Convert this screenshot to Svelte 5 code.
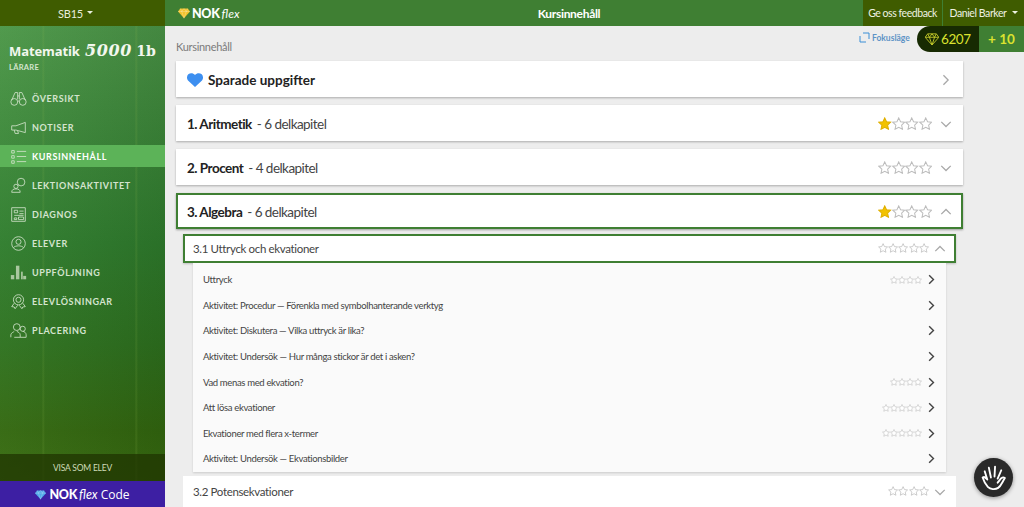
<script>
	const nav = [
		{ label: 'Översikt', icon: 'binoculars' },
		{ label: 'Notiser', icon: 'megaphone' },
		{ label: 'Kursinnehåll', icon: 'list', active: true },
		{ label: 'Lektionsaktivitet', icon: 'lesson' },
		{ label: 'Diagnos', icon: 'diagnos' },
		{ label: 'Elever', icon: 'student' },
		{ label: 'Uppföljning', icon: 'bars' },
		{ label: 'Elevlösningar', icon: 'award' },
		{ label: 'Placering', icon: 'people' }
	];

	const chapters = [
		{ num: '1. Aritmetik', sub: '6 delkapitel', filled: 1 },
		{ num: '2. Procent', sub: '4 delkapitel', filled: 0 },
		{ num: '3. Algebra', sub: '6 delkapitel', filled: 1, open: true }
	];

	const lessons = [
		{ name: 'Uttryck', stars: 4 },
		{ name: 'Aktivitet: Procedur — Förenkla med symbolhanterande verktyg', stars: 0 },
		{ name: 'Aktivitet: Diskutera — Vilka uttryck är lika?', stars: 0 },
		{ name: 'Aktivitet: Undersök — Hur många stickor är det i asken?', stars: 0 },
		{ name: 'Vad menas med ekvation?', stars: 4 },
		{ name: 'Att lösa ekvationer', stars: 5 },
		{ name: 'Ekvationer med flera x-termer', stars: 5 },
		{ name: 'Aktivitet: Undersök — Ekvationsbilder', stars: 0 }
	];

	const starPath = 'M12 1.500l3.200 6.900 7.300.9-5.400 5.100 1.500 7.400L12 18.200l-6.600 3.600 1.500-7.400-5.400-5.100 7.300-.9z';
</script>

{#snippet stars(count, filled, size)}
	<span class="stars">
		{#each Array(count) as _, i}
			<svg width={size} height={size} viewBox="0 0 24 24">
				<path
					d={starPath}
					fill={i < filled ? '#f2c200' : '#fff'}
					stroke={i < filled ? '#e0b000' : '#bdbdbd'}
					stroke-width="1.800"
				/>
			</svg>
		{/each}
	</span>
{/snippet}

{#snippet chevron(dir, color, size, weight = 1.500)}
	<svg class="chev" width={size} height={size} viewBox="0 0 14 14" fill="none" stroke={color} stroke-width={weight}>
		{#if dir === 'right'}
			<path d="M4 1.500L9.500 7 4 12.500" />
		{:else if dir === 'down'}
			<path d="M1.500 4.500L7 10l5.500-5.500" />
		{:else}
			<path d="M1.500 9.500L7 4l5.500 5.500" />
		{/if}
	</svg>
{/snippet}

{#snippet navIcon(name)}
	<svg class="nav-icon" viewBox="0 0 20 20" fill="none" stroke="#cfe2c8" stroke-width="1">
		{#if name === 'binoculars'}
			<circle cx="5" cy="14" r="4" /><circle cx="15" cy="14" r="4" />
			<path d="M2 12L6 3h3v8M18 12L14 3h-3v8M9 7h2M9 13h2" />
		{:else if name === 'megaphone'}
			<path d="M18 4v12L7 13H2V8h5zM5 13l1 4h4l-1-3" />
		{:else if name === 'list'}
			<path d="M2 3h3v3H2zM2 9h3v3H2zM2 15h3v3H2zM8 4h11M8 10h11M8 16h11" />
		{:else if name === 'lesson'}
			<circle cx="13" cy="6" r="4.500" /><circle cx="7" cy="11" r="2.500" />
			<path d="M2 18c0-3 2-4 5-4s5 1 5 4zM10 9l-1 1" />
		{:else if name === 'diagnos'}
			<path d="M2 2h16v16H2z" />
			<path d="M5 5h4v3H5zM11 6h5M11 9h5M5 11h11M5 14h3v2H5zM10 13h6v3h-6z" />
		{:else if name === 'student'}
			<circle cx="10" cy="10" r="8" /><circle cx="10" cy="8" r="3" />
			<path d="M4 15c2-3 10-3 12 0" />
		{:else if name === 'bars'}
			<g fill="#a9c89f" stroke="none">
				<rect x="1" y="13" width="4" height="5" /><rect x="7" y="2" width="4" height="16" /><rect x="13" y="9" width="2" height="9" /><rect x="15.500" y="14" width="3.500" height="4" />
			</g>
		{:else if name === 'award'}
			<circle cx="10" cy="8" r="6" /><circle cx="10" cy="8" r="3" />
			<path d="M5 12l-3 4 3 .5 1 2 3-4M15 12l3 4-3 .5-1 2-3-4" />
		{:else}
			<circle cx="8" cy="6" r="4" /><circle cx="15" cy="8" r="3" />
			<path d="M1 18v-3c0-2 3-3 4-4M15 11c2 0 4 2 4 4v3h-7M5 18h7v-3c0-2-2-3-4-4" />
		{/if}
	</svg>
{/snippet}

{#snippet diamond(w, fill)}
	<svg width={w} height={w} viewBox="0 0 16 16">
		<path d="M3 2h10l3 4-8 9-8-9z" fill={fill} />
		<path d="M0 6h16M5 6l3 9 3-9M3 2l2 4 3-4 3 4 2-4" fill="none" stroke="#fff" stroke-opacity=".45" stroke-width=".7" />
	</svg>
{/snippet}

<div class="page">
	<aside class="sidebar">
		<div class="class-select"><span>SB15</span><i class="caret"></i></div>
		<div class="course">
			<div class="course-title">Matematik <b>5000</b> <em>1b</em></div>
			<div class="role">LÄRARE</div>
		</div>
		<nav>
			{#each nav as item}
				<div class="nav-item" class:active={item.active}>
					{@render navIcon(item.icon)}
					<span>{item.label}</span>
				</div>
			{/each}
		</nav>
		<div class="view-as">VISA SOM ELEV</div>
		<div class="code-bar">
			{@render diamond(11, '#4fa8e8')}
			<span class="nok">NOK</span><span class="flex">flex</span><span class="code">Code</span>
		</div>
	</aside>

	<div class="main">
		<header class="topbar">
			<div class="logo">
				{@render diamond(12, '#f3c32d')}
				<span class="nok">NOK</span><span class="flex">flex</span>
			</div>
			<div class="top-title">Kursinnehåll</div>
			<div class="top-actions">
				<div class="top-btn">Ge oss feedback</div>
				<div class="top-btn user"><span>Daniel Barker</span><i class="caret"></i></div>
			</div>
		</header>

		<div class="content">
			<div class="toolrow">
				<div class="crumb">Kursinnehåll</div>
				<div class="focus">
					<svg width="11" height="11" viewBox="0 0 11 11" fill="none" stroke="#3b8fd6" stroke-width="1">
						<path d="M4 1h6v6M1 4v6h6" />
					</svg>
					Fokusläge
				</div>
			</div>

			<div class="card saved">
				<svg class="heart" width="16" height="14" viewBox="0 0 16 14">
					<path d="M8 14L1 7.500C-.500 5.800-.300 2.800 1.300 1.300 3.200-.500 6.300-.200 8 2c1.700-2.200 4.800-2.500 6.700-.700 1.600 1.500 1.800 4.500.3 6.200z" fill="#3d8ff0" />
				</svg>
				<span class="saved-label">Sparade uppgifter</span>
				{@render chevron('right', '#a8a8a8', 12)}
			</div>

			{#each chapters as ch}
				<div class="card chapter" class:open={ch.open}>
					<span class="ch-name">{ch.num}</span>
					<span class="ch-sub">- {ch.sub}</span>
					{@render stars(4, ch.filled, 13.500)}
					{@render chevron(ch.open ? 'up' : 'down', '#a8a8a8', 12)}
				</div>
			{/each}

			<div class="section open">
				<span class="sec-name">3.1 Uttryck och ekvationer</span>
				{@render stars(5, 0, 10.200)}
				{@render chevron('up', '#a8a8a8', 12)}
			</div>

			<div class="lessons">
				{#each lessons as l}
					<div class="lesson">
						<span class="lesson-name">{l.name}</span>
						{#if l.stars}{@render stars(l.stars, 0, 8)}{/if}
						{@render chevron('right', '#444', 11, 1.800)}
					</div>
				{/each}
			</div>

			<div class="section next">
				<span class="sec-name">3.2 Potensekvationer</span>
				{@render stars(4, 0, 10.200)}
				{@render chevron('down', '#a8a8a8', 12)}
			</div>
		</div>

		<div class="score">
			<div class="gems">
				<svg width="14" height="12" viewBox="0 0 16 14" fill="none" stroke="#c9cf2c" stroke-width="1">
					<path d="M3 1h10l3 4-8 9-8-9zM0 5h16M5 5l3 9 3-9M3 1l2 4 3-4 3 4 2-4" />
				</svg>
				<span>6207</span>
			</div>
			<div class="plus">+ 10</div>
		</div>

		<button class="hand" aria-label="Räck upp handen">
			<svg width="27" height="29" viewBox="0 0 26 28" fill="none" stroke="#fff" stroke-width="1.800" stroke-linecap="round" stroke-linejoin="round">
				<path d="M7 16L4.500 8M10.500 14L8.500 4.500M14 13l.5-9.500M17 15l3.500-8M7 16c-1-1.500-3-3-4.500-2 1 3 3 7 5 9 2.500 2.500 7 3 10 1 3-2 3.500-5 6.500-9.500-1.500-1-3.500-.5-5 2L17 19" />
			</svg>
		</button>
	</div>
</div>

<style>
	:global(body) {
		margin: 0;
		font-family: Lato, 'Open Sans', sans-serif;
		overflow: hidden;
	}

	.page {
		display: flex;
		width: 1024px;
		height: 507px;
		overflow: hidden;
	}

	.sidebar {
		width: 165px;
		flex: none;
		display: flex;
		flex-direction: column;
		color: #fff;
		background:
			linear-gradient(90deg, transparent 42px, rgba(150, 190, 80, .14) 43px, transparent 45px, transparent 135px, rgba(150, 190, 80, .16) 136px, transparent 138px),
			linear-gradient(90deg, rgba(255, 255, 255, .03), rgba(0, 0, 0, .1)),
			linear-gradient(180deg, #4f9a4b 0%, #408c3d 22%, #2f7d2d 48%, #2e721f 68%, #33680f 85%, #3d7012 100%);
	}

	.class-select {
		height: 26px;
		background: #3f5c00;
		display: flex;
		align-items: center;
		justify-content: center;
		gap: 4px;
		font-size: 11px;
		letter-spacing: -.2px;
		color: #e8eedd;
		padding-right: 14px;
		box-sizing: border-box;
	}

	.caret {
		width: 0;
		height: 0;
		border-left: 3.500px solid transparent;
		border-right: 3.500px solid transparent;
		border-top: 3.500px solid currentColor;
		margin-top: -2px;
	}

	.course {
		padding: 16px 0 0 9px;
		height: 42px;
	}

	.course-title {
		font-size: 13px;
		font-weight: 700;
		font-family: 'Open Sans', sans-serif;
		white-space: nowrap;
		color: #f2f7ee;
		letter-spacing: -.1px;
		line-height: 17px;
	}

	.course-title b {
		font-family: 'DejaVu Serif', serif;
		font-style: italic;
		font-weight: 700;
		font-size: 16px;
		letter-spacing: .6px;
		margin: 0 1px 0 2px;
	}

	.course-title em {
		font-family: 'DejaVu Serif', serif;
		font-style: normal;
		font-size: 14px;
	}

	.role {
		font-size: 7.500px;
		font-weight: 700;
		letter-spacing: .3px;
		margin-top: 3px;
		color: #d5e5cf;
	}

	nav {
		flex: 1;
		padding-top: 3px;
	}

	.nav-item {
		height: 22px;
		margin-bottom: 7px;
		display: flex;
		align-items: center;
		padding-left: 10px;
		gap: 5px;
		text-transform: uppercase;
		font-size: 9px;
		font-weight: 700;
		letter-spacing: .6px;
		color: #d4e4ce;
	}

	.nav-item.active {
		background: #5cb358;
		color: #fff;
	}

	.nav-icon {
		width: 17px;
		height: 17px;
		flex: none;
	}

	.view-as {
		height: 27px;
		background: rgba(30, 50, 0, .72);
		display: flex;
		align-items: center;
		justify-content: center;
		font-size: 8.500px;
		letter-spacing: -.2px;
		color: #cfdcb8;
	}

	.code-bar {
		height: 26px;
		background: #3d1fa3;
		display: flex;
		align-items: center;
		justify-content: center;
		font-size: 12.500px;
	}

	.nok {
		font-weight: 900;
		font-size: 12.500px;
		letter-spacing: -.3px;
		color: #fff;
		margin-left: 3px;
	}

	.flex {
		font-style: italic;
		font-size: 12.500px;
		margin-left: 2px;
	}

	.code {
		margin-left: 3px;
		font-family: 'Open Sans', sans-serif;
		font-size: 12px;
	}

	.main {
		flex: 1;
		position: relative;
		display: flex;
		flex-direction: column;
		background: #ededed;
		min-width: 0;
	}

	.topbar {
		height: 26px;
		flex: none;
		background: #3f7f33;
		display: flex;
		align-items: center;
		color: #fff;
		position: relative;
	}

	.logo {
		display: flex;
		align-items: center;
		padding-left: 13px;
		width: 200px;
		box-sizing: border-box;
	}

	.logo .nok {
		font-size: 12.500px;
		margin-left: 2px;
	}

	.logo .flex {
		font-size: 12px;
		font-weight: 400;
		margin-left: 2px;
	}

	.top-title {
		flex: 1;
		text-align: center;
		font-size: 12px;
		font-weight: 700;
		letter-spacing: -.3px;
		padding-right: 90px;
	}

	.top-actions {
		display: flex;
		height: 100%;
		gap: 1px;
	}

	.top-btn {
		background: #3f5c00;
		width: 79px;
		display: flex;
		align-items: center;
		justify-content: center;
		gap: 5px;
		font-size: 10.500px;
		letter-spacing: -.45px;
		color: #eef2e2;
		white-space: nowrap;
	}

	.top-btn.user {
		width: 81px;
		letter-spacing: -.4px;
	}

	.content {
		flex: 1;
		padding: 0 61px 0 11px;
		overflow: hidden;
	}

	.toolrow {
		height: 35px;
		display: flex;
		align-items: flex-end;
		padding-bottom: 8px;
		box-sizing: border-box;
		position: relative;
	}

	.crumb {
		font-size: 11px;
		letter-spacing: -.3px;
		color: #7b7b7b;
		line-height: 13px;
	}

	.focus {
		position: absolute;
		left: 683px;
		top: 6px;
		display: flex;
		align-items: center;
		gap: 2px;
		font-size: 8.500px;
		font-weight: 700;
		color: #5d93c6;
	}

	.card {
		background: #fff;
		height: 36px;
		margin-bottom: 8px;
		padding: 1px 11px 0;
		box-shadow: 0 1px 2px rgba(0, 0, 0, .28);
		display: flex;
		align-items: center;
		box-sizing: border-box;
		color: #222;
	}

	.saved-label {
		font-size: 13.500px;
		font-weight: 700;
		margin-left: 5px;
		flex: 1;
	}

	.heart {
		flex: none;
	}

	.ch-name {
		font-size: 13.500px;
		font-weight: 700;
		letter-spacing: -.5px;
	}

	.ch-sub {
		font-size: 13.500px;
		letter-spacing: -.55px;
		color: #444;
		margin-left: 5px;
		flex: 1;
	}

	.stars {
		display: inline-flex;
	}

	.chev {
		flex: none;
		margin-left: 8px;
	}

	.chapter.open {
		border: 2px solid #3f7f33;
		padding: 1px 9px 0;
		margin-bottom: 5px;
		box-shadow: 0 1px 2px rgba(0, 0, 0, .35);
	}

	.section {
		margin: 0 7px;
		background: #fff;
		display: flex;
		align-items: center;
		padding: 0 10px;
		box-sizing: border-box;
		color: #444;
	}

	.section .chev {
		margin-left: 5px;
	}

	.section.open {
		height: 29px;
		border: 2px solid #3f7f33;
		padding: 0 8px;
		box-shadow: 0 1px 2px rgba(0, 0, 0, .2);
	}

	.section.next {
		height: 31px;
		margin-top: 4px;
	}

	.sec-name {
		font-size: 11.500px;
		letter-spacing: -.35px;
		flex: 1;
	}

	.lessons {
		margin: 0 17px;
		background: #fafafa;
		box-shadow: 0 1px 2px rgba(0, 0, 0, .14);
		height: 209px;
		padding-top: 4px;
		box-sizing: border-box;
	}

	.lesson {
		height: 25.600px;
		display: flex;
		align-items: center;
		padding: 0 9px 0 10px;
	}

	.lesson-name {
		flex: 1;
		font-size: 9.500px;
		letter-spacing: -.34px;
		color: #444;
	}

	.lesson .chev {
		margin-left: 4px;
	}

	.score {
		position: absolute;
		right: 0;
		top: 26px;
		height: 26px;
		display: flex;
	}

	.gems {
		background: #172a02;
		border-radius: 13px 0 0 13px;
		width: 62px;
		padding-left: 8px;
		box-sizing: border-box;
		display: flex;
		align-items: center;
		gap: 2px;
		font-size: 13.500px;
		letter-spacing: -.4px;
		color: #dbe22f;
	}

	.plus {
		background: #3f7f33;
		width: 45px;
		display: flex;
		align-items: center;
		justify-content: center;
		font-size: 13.500px;
		font-weight: 700;
		color: #dbe22f;
	}

	.hand {
		position: absolute;
		right: 11px;
		top: 458px;
		width: 39px;
		height: 39px;
		border: none;
		border-radius: 50%;
		background: #2a2a2a;
		box-shadow: 0 1px 4px rgba(0, 0, 0, .4);
		padding: 0;
		display: flex;
		align-items: center;
		justify-content: center;
	}
</style>
